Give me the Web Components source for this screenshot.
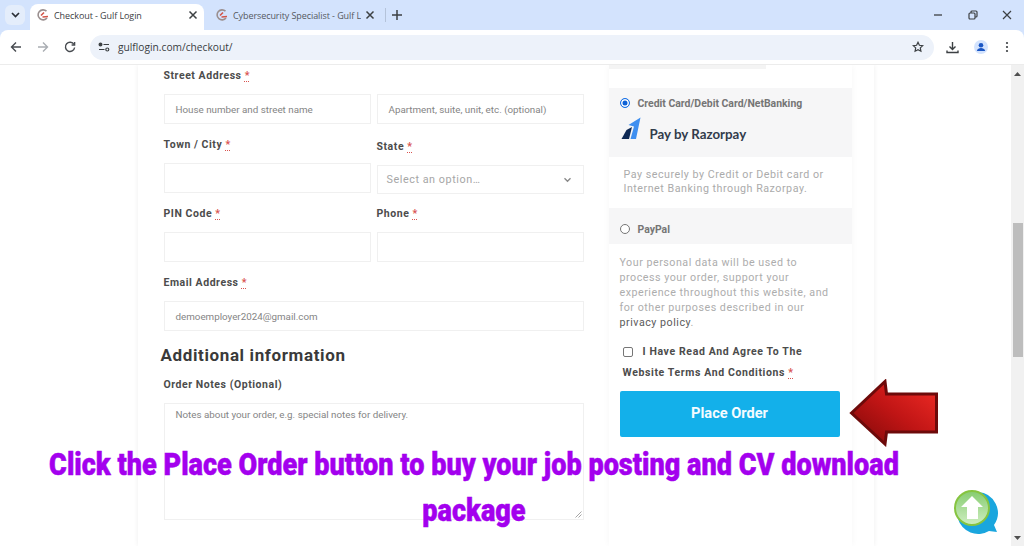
<!DOCTYPE html>
<html lang="en">
<head>
<meta charset="utf-8">
<title>Checkout - Gulf Login</title>
<style>
	html, body { margin: 0; height: 100%; overflow: hidden; background: #fff; }
	body { display: flex; flex-direction: column; font-family: Roboto, "Liberation Sans", sans-serif; }
</style>
</head>
<body>
<browser-chrome></browser-chrome>
<page-view>
	<checkout-sheet>
		<checkout-form slot="form"></checkout-form>
		<payment-panel slot="side"></payment-panel>
	</checkout-sheet>
	<guide-overlay slot="overlay"></guide-overlay>
</page-view>

<script>
const FAVICON = `<svg width="14" height="14" viewBox="0 0 14 14" fill="none">
	<path d="M10.500 3.200A5 5 0 1 0 11 10" stroke="#9a8f8f" stroke-width="1.600"/>
	<path d="M5 7.500 8 4.500M6.500 9l5.500-.5" stroke="#d2564a" stroke-width="1.600"/>
</svg>`;

class BrowserTab extends HTMLElement {
	constructor(){
		super();
		this.attachShadow({mode : 'open'});
	}

	connectedCallback(){
		const active = this.hasAttribute('active');
		this.shadow = this.shadowRoot;
		this.shadow.innerHTML = `
			<style>
				:host{
					display: flex;
					align-items: center;
					box-sizing: border-box;
					height: 26px;
					width: ${this.getAttribute('width')};
					padding: 0 5px 4px 6px;
					gap: 4px;
					border-radius: 8px 8px 0 0;
					background: ${active ? '#fff' : 'transparent'};
					color: ${active ? '#3c4043' : '#55595f'};
					font: 9px "Open Sans", sans-serif;
					letter-spacing: -.08px;
				}
				.fav{ display: flex; width: 14px; }
				.title{ flex: 1; white-space: nowrap; overflow: hidden; }
				svg.x{ flex: none; margin-right: 1px; }
			</style>
			<span class="fav">${FAVICON}</span>
			<span class="title"><slot></slot></span>
			<svg class="x" width="10" height="10" viewBox="0 0 10 10"><path d="M1.500 1.500l7 7M8.500 1.500l-7 7" stroke="#3c4043" stroke-width="1.500"/></svg>
		`;
	}
}
customElements.define('browser-tab', BrowserTab);

class BrowserChrome extends HTMLElement {
	constructor(){
		super();
		this.shadow = this.attachShadow({mode : 'open'});
		this.shadow.innerHTML = `
			<style>
				:host{ display: block; flex: none; height: 65px; background: #d3e3fd; position: relative; }
				.strip{ display: flex; align-items: flex-end; height: 30px; padding-left: 5px; box-sizing: border-box; }
				.menu{ width: 20px; height: 20px; margin: 0 5px 5px 0; border-radius: 6px; background: #e4edfb; display: flex; align-items: center; justify-content: center; }
				.second{ margin-left: 5px; }
				.sep{ width: 1px; height: 14px; margin: 0 5px 8px 4px; background: #b4c3da; }
				.plus{ width: 12px; height: 30px; display: flex; align-items: center; justify-content: center; }
				.spacer{ flex: 1; }
				.win{ display: flex; align-items: center; height: 30px; align-self: flex-end; gap: 24.500px; padding-right: 12px; }
				.bar{ display: flex; align-items: center; height: 35px; background: #fff; border-radius: 8px 8px 0 0; padding: 0 0 0 10px; box-sizing: border-box; border-bottom: 1px solid #ececec; }
				.nav{ display: flex; align-items: center; gap: 15px; width: 80px; }
				.omni{ flex: 1; display: flex; align-items: center; height: 25px; border-radius: 13px; background: #edf2fa; padding: 0 10px 0 8px; color: #3a3d42; font: 10.200px "Open Sans", sans-serif; }
				.omni .tune{ margin-right: 8px; display: flex; }
				.omni .url{ flex: 1; }
				.tools{ display: flex; align-items: center; width: 90px; padding-left: 12px; gap: 15px; box-sizing: border-box; }
				.tools .dots{ margin-left: 2px; }
			</style>
			<div class="strip">
				<div class="menu"><svg width="9" height="6" viewBox="0 0 9 6"><path d="M1 1l3.500 3.500L8 1" fill="none" stroke="#2b2f36" stroke-width="1.700"/></svg></div>
				<browser-tab active width="174px">Checkout - Gulf Login</browser-tab>
				<browser-tab class="second" width="172px">Cybersecurity Specialist - Gulf L</browser-tab>
				<div class="sep"></div>
				<div class="plus"><svg width="10" height="10" viewBox="0 0 10 10"><path d="M5 0v10M0 5h10" stroke="#3c4043" stroke-width="1.500"/></svg></div>
				<div class="spacer"></div>
				<div class="win">
					<svg width="10" height="10" viewBox="0 0 10 10"><path d="M1 5h8" stroke="#3c4043" stroke-width="1.300"/></svg>
					<svg width="10" height="10" viewBox="0 0 10 10" fill="none" stroke="#3c4043" stroke-width="1.200"><rect x="1" y="3" width="6" height="6" rx="1"/><path d="M3 3V2a1 1 0 0 1 1-1h4a1 1 0 0 1 1 1v4a1 1 0 0 1-1 1H7"/></svg>
					<svg width="10" height="10" viewBox="0 0 10 10"><path d="M1 1l8 8M9 1l-8 8" stroke="#3c4043" stroke-width="1.200"/></svg>
				</div>
			</div>
			<div class="bar">
				<div class="nav">
					<svg width="12" height="12" viewBox="0 0 12 12" fill="none" stroke="#474b50" stroke-width="1.400"><path d="M11 6H1.500M6 1.500 1.500 6 6 10.500"/></svg>
					<svg width="12" height="12" viewBox="0 0 12 12" fill="none" stroke="#a9adb2" stroke-width="1.400"><path d="M1 6h9.500M6 1.500 10.500 6 6 10.500"/></svg>
					<svg width="12" height="12" viewBox="0 0 12 12" fill="none" stroke="#474b50" stroke-width="1.400"><path d="M10 3.500A4.600 4.600 0 1 0 10.600 6.500"/><path d="M10.600 1v3h-3" /></svg>
				</div>
				<div class="omni">
					<span class="tune"><svg width="12" height="10" viewBox="0 0 12 10" fill="none" stroke="#3c4043" stroke-width="1.200"><circle cx="2.500" cy="2.500" r="1.400" fill="#3c4043"/><path d="M5.500 2.500H11M1 7.500H6.500"/><circle cx="9.300" cy="7.500" r="1.500"/></svg></span>
					<span class="url">gulflogin.com/checkout/</span>
					<svg width="12" height="12" viewBox="0 0 12 12" fill="none" stroke="#3c4043" stroke-width="1.200"><path d="M6 1.300l1.400 3 3.300.4-2.400 2.200.6 3.300L6 8.600l-2.900 1.600.6-3.300L1.300 4.700l3.300-.4z"/></svg>
				</div>
				<div class="tools">
					<svg width="13" height="13" viewBox="0 0 13 13" fill="none" stroke="#3c4043" stroke-width="1.400"><path d="M6.500 1v7M3.500 5.500l3 3 3-3M1 9.500v2h11v-2"/></svg>
					<svg width="14" height="14" viewBox="0 0 14 14"><circle cx="7" cy="7" r="7" fill="#d3e3fd"/><circle cx="7" cy="5.200" r="2.300" fill="#1a56c4"/><path d="M2.800 11c.6-2.200 2.300-3 4.200-3s3.600.8 4.200 3z" fill="#1a56c4"/></svg>
					<svg class="dots" width="4" height="12" viewBox="0 0 4 12" fill="#3c4043"><circle cx="2" cy="2" r="1.100"/><circle cx="2" cy="6" r="1.100"/><circle cx="2" cy="10" r="1.100"/></svg>
				</div>
			</div>
		`;
	}
}
customElements.define('browser-chrome', BrowserChrome);

class PageView extends HTMLElement {
	constructor(){
		super();
		this.shadow = this.attachShadow({mode : 'open'});
		this.shadow.innerHTML = `
			<style>
				:host{ display: flex; flex: 1; min-height: 0; position: relative; overflow: hidden; }
				.content{ flex: 1; min-width: 0; display: flex; overflow: hidden; }
				.track{ flex: none; width: 13px; background: #f1f1f1; display: flex; flex-direction: column; align-items: center; box-sizing: border-box; padding-top: 7px; }
				.thumb{ width: 10px; height: 134px; margin-top: 147px; background: #bdbdbd; }
				.spring{ flex: 1; }
				.down{ margin-bottom: 6px; }
			</style>
			<div class="content"><slot></slot></div>
			<div class="track">
				<svg width="7" height="4" viewBox="0 0 7 4"><path d="M3.500 0 7 4H0z" fill="#505050"/></svg>
				<div class="thumb"></div>
				<div class="spring"></div>
				<svg class="down" width="7" height="4" viewBox="0 0 7 4"><path d="M0 0h7L3.500 4z" fill="#505050"/></svg>
			</div>
			<slot name="overlay"></slot>
		`;
	}
}
customElements.define('page-view', PageView);

class CheckoutSheet extends HTMLElement {
	constructor(){
		super();
		this.shadow = this.attachShadow({mode : 'open'});
		this.shadow.innerHTML = `
			<style>
				:host{
					display: grid;
					grid-template-columns: 420px 243px;
					column-gap: 25px;
					align-items: start;
					box-sizing: border-box;
					width: 736px;
					margin: 0 auto;
					padding-left: 26px;
					box-shadow: 0 0 5px rgba(0,0,0,.07);
					background: #fff;
				}
			</style>
			<slot name="form"></slot>
			<slot name="side"></slot>
		`;
	}
}
customElements.define('checkout-sheet', CheckoutSheet);

class ReqMark extends HTMLElement {
	constructor(){
		super();
		this.shadow = this.attachShadow({mode : 'open'});
		this.shadow.innerHTML = `
			<style>
				:host{ display: inline; color: #d9534f; text-decoration: underline dotted 1px; text-underline-offset: 2px; }
			</style>*`;
	}
}
customElements.define('req-mark', ReqMark);

class FormField extends HTMLElement {
	constructor(){
		super();
		this.shadow = this.attachShadow({mode : 'open'});
	}

	connectedCallback(){
		const req = this.hasAttribute('required') ? ' <req-mark></req-mark>' : '';
		const height = this.getAttribute('box-height') || '30px';
		this.shadow.innerHTML = `
			<style>
				:host{ display: block; }
				label{
					display: block;
					height: 18px;
					line-height: 20px;
					margin-bottom: 10px;
					font-size: 10.500px;
					font-weight: 700;
					letter-spacing: .55px;
					color: #4c4c4c;
					white-space: nowrap;
				}
				.box{
					position: relative;
					display: flex;
					align-items: center;
					box-sizing: border-box;
					height: ${height};
					padding: 0 11px;
					border: 1px solid #f0f0f0;
					font-size: 9.800px;
					color: #858585;
					white-space: nowrap;
				}
				:host([multiline]) .box{ align-items: flex-start; padding-top: 5px; }
				:host([select]) .box{ font-size: 10.800px; letter-spacing: .55px; color: #a6a6a6; padding-left: 9px; justify-content: space-between; }
				.grip{ position: absolute; right: 1px; bottom: 1px; }
			</style>
			<label>${this.getAttribute('label')}${req}</label>
			<div class="box">
				<span><slot></slot></span>
				${this.hasAttribute('select') ? '<svg width="9" height="6" viewBox="0 0 9 6"><path d="M1.500 1.200 4.500 4.200 7.500 1.200" fill="none" stroke="#8a8a8a" stroke-width="1.400"/></svg>' : ''}
				${this.hasAttribute('multiline') ? '<svg class="grip" width="7" height="7" viewBox="0 0 7 7"><path d="M6.500.5l-6 6M6.500 3.500l-3 3" stroke="#8f8f8f" stroke-width=".8"/></svg>' : ''}
			</div>
		`;
	}
}
customElements.define('form-field', FormField);

class CheckoutForm extends HTMLElement {
	constructor(){
		super();
		this.shadow = this.attachShadow({mode : 'open'});
		this.shadow.innerHTML = `
			<style>
				:host{ display: block; padding-top: 1px; }
				.grid{ display: grid; grid-template-columns: 207px 207px; column-gap: 6px; row-gap: 11px; }
				.wide{ grid-column: 1 / 3; }
				.state{ margin: 2px 0 -1px; }
				h3{
					margin: 12px 0 8px -3px;
					height: 24px;
					line-height: 24px;
					font-size: 17px;
					font-weight: 700;
					letter-spacing: .62px;
					color: #3a3a3a;
				}
			</style>
			<div class="grid">
				<form-field label="Street Address" required>House number and street name</form-field>
				<form-field label="&nbsp;">Apartment, suite, unit, etc. (optional)</form-field>
				<form-field label="Town / City" required></form-field>
				<form-field label="State" required select class="state" box-height="29px">Select an option…</form-field>
				<form-field label="PIN Code" required></form-field>
				<form-field label="Phone" required></form-field>
				<form-field class="wide" label="Email Address" required>demoemployer2024@gmail.com</form-field>
			</div>
			<h3>Additional information</h3>
			<form-field label="Order Notes (Optional)" multiline box-height="117px">Notes about your order, e.g. special notes for delivery.</form-field>
		`;
	}
}
customElements.define('checkout-form', CheckoutForm);

class PaymentPanel extends HTMLElement {
	constructor(){
		super();
		this.shadow = this.attachShadow({mode : 'open'});
		this.shadow.innerHTML = `
			<style>
				:host{ display: block; height: 481px; background: #fff; box-shadow: 0 0 7px rgba(0,0,0,.04); position: relative; }
				.top{ height: 23px; box-sizing: border-box; }
				.top div{ height: 4px; width: 157px; background: #f4f4f4; }
				.head{ background: #f6f6f7; box-sizing: border-box; }
				.card{ height: 69px; padding: 8px 0 0 11px; }
				.pp{ height: 36px; padding: 14px 0 0 11px; margin-bottom: 1px; }
				.row{ display: flex; align-items: center; gap: 8px; height: 14px; font-size: 10.450px; font-weight: 700; color: #757575; white-space: nowrap; }
				.radio{ box-sizing: border-box; flex: none; width: 10px; height: 10px; border-radius: 50%; border: 1px solid #767676; background: #fff; }
				.radio.on{ border: 1.500px solid #1a73e8; box-shadow: inset 0 0 0 1.500px #fff; background: #0f62d6; }
				.brand{ display: flex; align-items: center; margin: 5px 0 0 1px; }
				.brand span{ margin-left: 9px; padding-top: 11px; font: 700 13.300px Lato, sans-serif; color: #323c4b; white-space: nowrap; }
				.desc{ height: 51px; padding: 10.500px 0 0 15px; box-sizing: border-box; font-size: 10.700px; line-height: 14.500px; letter-spacing: .52px; color: #ababab; white-space: nowrap; }
				.policy{ padding: 10px 0 0 11px; font-size: 10.700px; line-height: 15px; letter-spacing: .52px; color: #adadad; white-space: nowrap; }
				.policy b{ font-weight: 400; color: #5b5b5b; }
				.agree{ padding: 11px 0 0 14px; font-size: 10.500px; font-weight: 700; letter-spacing: .62px; color: #4c4c4c; white-space: nowrap; }
				.agree div{ height: 21px; line-height: 21px; display: flex; align-items: center; }
				.box{ box-sizing: border-box; width: 10px; height: 10px; margin-right: 10px; border: 1px solid #767676; border-radius: 2px; background: #fff; }
				.btn{ margin: 8px 12px 0 11px; height: 46px; box-sizing: border-box; padding-bottom: 2px; border-radius: 2px; background: #13b0ea; color: #f4fbff; display: flex; align-items: center; justify-content: center; font-size: 14.600px; font-weight: 700; }
			</style>
			<div class="top"><div></div></div>
			<div class="head card">
				<div class="row"><span class="radio on"></span>Credit Card/Debit Card/NetBanking</div>
				<div class="brand">
					<svg width="20" height="24" viewBox="0 0 20 24"><path d="M.5 22 5.500 13 11 10 8 22z" fill="#0f2a55"/><path d="M7.500 8 19.500.5 15 22h-5.500L13 9.500z" fill="#3f8ff0"/></svg>
					<span>Pay by Razorpay</span>
				</div>
			</div>
			<div class="desc">Pay securely by Credit or Debit card or<br>Internet Banking through Razorpay.</div>
			<div class="head pp"><div class="row"><span class="radio"></span>PayPal</div></div>
			<div class="policy">Your personal data will be used to<br>process your order, support your<br>experience throughout this website, and<br>for other purposes described in our<br><b>privacy policy</b>.</div>
			<div class="agree">
				<div><span class="box"></span>I Have Read And Agree To The</div>
				<div>Website Terms And Conditions&nbsp;<req-mark></req-mark></div>
			</div>
			<div class="btn">Place Order</div>
		`;
	}
}
customElements.define('payment-panel', PaymentPanel);

// caption, arrow and help bubble sit on top of the page
class GuideOverlay extends HTMLElement {
	constructor(){
		super();
		this.shadow = this.attachShadow({mode : 'open'});
		this.shadow.innerHTML = `
			<style>
				:host{ position: absolute; inset: 0; pointer-events: none; display: block; }
				.caption{
					position: absolute;
					left: -100px;
					top: 377px;
					width: 1148px;
					text-align: center;
					white-space: nowrap;
					font-size: 30.500px;
					line-height: 46px;
					font-weight: 900;
					color: #a300ee;
					-webkit-text-stroke: .5px #a300ee;
					transform-origin: 574px 0;
					transform: scaleX(.888);
				}
				.arrow{ position: absolute; left: 849px; top: 314px; }
				.home{ position: absolute; left: 952px; top: 423px; }
			</style>
			<div class="caption">Click the Place Order button to buy your job posting and CV download<br>package</div>
			<svg class="arrow" width="90" height="68" viewBox="0 0 90 68">
				<defs><linearGradient id="red" x1="0" y1="1" x2="1" y2="0">
					<stop offset="0" stop-color="#7c0808"/><stop offset=".5" stop-color="#c01515"/><stop offset="1" stop-color="#f22c26"/>
				</linearGradient></defs>
				<path d="M2.500 34 36 2.500 37.500 15H87.500V53H37.500L36 65z" fill="url(#red)" stroke="#6d0a0a" stroke-width="3" stroke-linejoin="miter"/>
			</svg>
			<svg class="home" width="50" height="50" viewBox="0 0 50 50">
				<defs>
					<linearGradient id="grn" x1="0" y1="0" x2="0" y2="1"><stop offset="0" stop-color="#86cc70"/><stop offset="1" stop-color="#cfeec2"/></linearGradient>
				</defs>
				<path d="M26 4a21 21 0 1 0 11 39l8 1-3-7A21 21 0 0 0 26 4z" fill="#1aa6de"/>
				<circle cx="20" cy="20" r="17" fill="url(#grn)" stroke="#86c440" stroke-width="2"/>
				<path d="M20 8 31 19h-5v12H15V19H9z" fill="#fff"/>
			</svg>
		`;
	}
}
customElements.define('guide-overlay', GuideOverlay);
</script>
</body>
</html>
